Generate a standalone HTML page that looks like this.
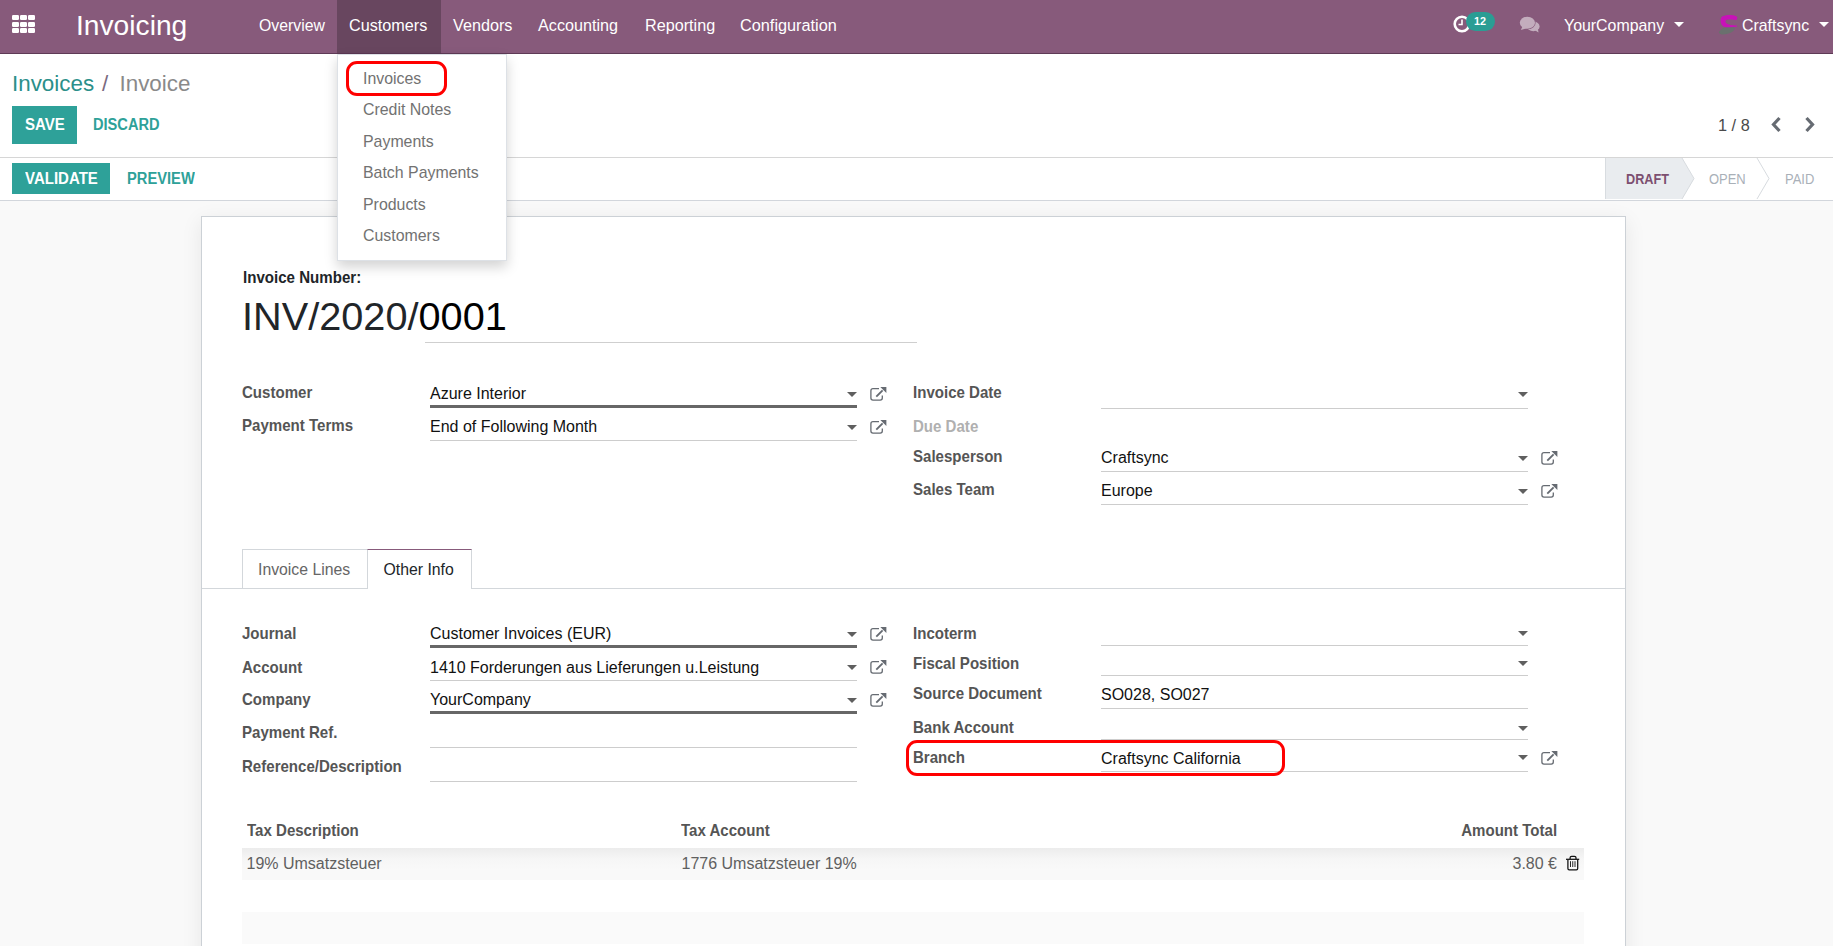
<!DOCTYPE html>
<html><head><meta charset="utf-8"><title>Invoice</title>
<style>
html,body{margin:0;padding:0;width:1833px;height:946px;overflow:hidden;background:#f9f9f9;font-family:"Liberation Sans", sans-serif;}
.t{position:absolute;line-height:1;white-space:nowrap;}
</style></head><body>
<div style="position:absolute;left:0px;top:0px;width:1833px;height:53px;background:#875a7b"></div>
<div style="position:absolute;left:0px;top:53px;width:1833px;height:1px;background:#5e3a56"></div>
<div style="position:absolute;left:337px;top:0px;width:104px;height:53px;background:#68465f"></div>
<div style="position:absolute;left:337px;top:53px;width:104px;height:1px;background:#5a3752"></div>
<div style="position:absolute;left:12px;top:14.9px;width:6.6px;height:5px;background:#fff;border-radius:1.2px"></div>
<div style="position:absolute;left:12px;top:21.5px;width:6.6px;height:5px;background:#fff;border-radius:1.2px"></div>
<div style="position:absolute;left:12px;top:28.1px;width:6.6px;height:5px;background:#fff;border-radius:1.2px"></div>
<div style="position:absolute;left:20px;top:14.9px;width:6.6px;height:5px;background:#fff;border-radius:1.2px"></div>
<div style="position:absolute;left:20px;top:21.5px;width:6.6px;height:5px;background:#fff;border-radius:1.2px"></div>
<div style="position:absolute;left:20px;top:28.1px;width:6.6px;height:5px;background:#fff;border-radius:1.2px"></div>
<div style="position:absolute;left:28px;top:14.9px;width:6.6px;height:5px;background:#fff;border-radius:1.2px"></div>
<div style="position:absolute;left:28px;top:21.5px;width:6.6px;height:5px;background:#fff;border-radius:1.2px"></div>
<div style="position:absolute;left:28px;top:28.1px;width:6.6px;height:5px;background:#fff;border-radius:1.2px"></div>
<div class="t" style="left:76px;top:11.33px;font-size:28.2px;font-weight:400;color:#fff;">Invoicing</div>
<div class="t" style="left:259px;top:17.63px;font-size:15.8px;font-weight:400;color:#fff;">Overview</div>
<div class="t" style="left:349px;top:17.29px;font-size:16.2px;font-weight:400;color:#fff;">Customers</div>
<div class="t" style="left:453px;top:17.29px;font-size:16.2px;font-weight:400;color:#fff;">Vendors</div>
<div class="t" style="left:538px;top:17.29px;font-size:16.2px;font-weight:400;color:#fff;">Accounting</div>
<div class="t" style="left:645px;top:17.29px;font-size:16.2px;font-weight:400;color:#fff;">Reporting</div>
<div class="t" style="left:740px;top:17.20px;font-size:16.3px;font-weight:400;color:#fff;">Configuration</div>
<svg style="position:absolute;left:1452px;top:14px" width="20" height="20" viewBox="0 0 20 20"><circle cx="10" cy="10" r="7.3" fill="none" stroke="#fff" stroke-width="2.6"/><path d="M10 5.5V10.5H6.5" fill="none" stroke="#fff" stroke-width="1.6"/></svg>
<div style="position:absolute;left:1466px;top:12px;width:29px;height:19px;background:#2a9d94;border-radius:10px"></div>
<div class="t" style="left:1474px;top:16.36px;font-size:10.8px;font-weight:700;color:#fff;">12</div>
<svg style="position:absolute;left:1518px;top:15px" width="24" height="20" viewBox="0 0 24 20"><g fill="#c3adbd"><ellipse cx="15.3" cy="11.4" rx="6.3" ry="4.9"/><path d="M16.5 15 L20.5 17.6 L19.8 13.5Z"/></g><g fill="#c3adbd" stroke="#875a7b" stroke-width="1.3"><ellipse cx="9.4" cy="7.7" rx="7.6" ry="6"/></g><g fill="#c3adbd"><ellipse cx="9.4" cy="7.7" rx="7.6" ry="6"/><path d="M4.5 11.5 L2.8 15 L9 13.2Z"/></g></svg>
<div class="t" style="left:1564px;top:17.54px;font-size:15.9px;font-weight:400;color:#fff;">YourCompany</div>
<svg style="position:absolute;left:1674px;top:22px" width="10" height="5" viewBox="0 0 10 5"><path d="M0 0H10L5 5Z" fill="#fff"/></svg>
<svg style="position:absolute;left:1712px;top:10px" width="30" height="28" viewBox="0 0 30 28"><ellipse cx="14.8" cy="20.6" rx="8.2" ry="3.4" transform="rotate(-16 14.8 20.6)" fill="#6a706e"/><path d="M25.4 7.6 C24.6 4.2, 13.5 4.2, 10 6.6 C7.8 8.5, 8 14.5, 11.5 16.4 C15 17.8, 21 17.2, 25.4 16.6 L24.6 15.6 C20.5 15.4, 16 14.8, 14 13 C12.8 11.6, 13.4 9.8, 15.5 9.6 C18.5 9.3, 22 9.6, 24.5 10.2 Z" fill="#c812b8"/></svg>
<div class="t" style="left:1742px;top:17.54px;font-size:15.9px;font-weight:400;color:#fff;">Craftsync</div>
<svg style="position:absolute;left:1819px;top:22px" width="10" height="5" viewBox="0 0 10 5"><path d="M0 0H10L5 5Z" fill="#fff"/></svg>
<div style="position:absolute;left:0px;top:54px;width:1833px;height:103px;background:#fff"></div>
<div style="position:absolute;left:0px;top:157px;width:1833px;height:1px;background:#d6d6d6"></div>
<div class="t" style="left:12px;top:73.04px;font-size:22.4px;font-weight:400;color:#2b8f8a;">Invoices</div>
<div class="t" style="left:102px;top:73.04px;font-size:22.4px;font-weight:400;color:#7a6a80;">/</div>
<div class="t" style="left:119.5px;top:73.04px;font-size:22.4px;font-weight:400;color:#8a8a8a;">Invoice</div>
<div style="position:absolute;left:12px;top:106px;width:65px;height:38px;background:#2ea199"></div>
<div class="t" style="left:24.5px;top:116.63px;font-size:15.8px;font-weight:700;color:#fff;transform:scaleX(0.95);transform-origin:0 0;">SAVE</div>
<div class="t" style="left:93px;top:116.63px;font-size:15.8px;font-weight:700;color:#2ea199;transform:scaleX(0.925);transform-origin:0 0;">DISCARD</div>
<div class="t" style="left:1718px;top:117.20px;font-size:16.3px;font-weight:400;color:#4a4a4a;">1 / 8</div>
<svg style="position:absolute;left:1770px;top:116px" width="13" height="17" viewBox="0 0 13 17"><path d="M9.5 2 L3.5 8.5 L9.5 15" fill="none" stroke="#666b72" stroke-width="3.2"/></svg>
<svg style="position:absolute;left:1803px;top:116px" width="13" height="17" viewBox="0 0 13 17"><path d="M3.5 2 L9.5 8.5 L3.5 15" fill="none" stroke="#666b72" stroke-width="3.2"/></svg>
<div style="position:absolute;left:0px;top:158px;width:1833px;height:42px;background:#fff"></div>
<div style="position:absolute;left:0px;top:200px;width:1833px;height:1px;background:#d2d6dc"></div>
<div style="position:absolute;left:12px;top:163px;width:98px;height:31px;background:#2ea199"></div>
<div class="t" style="left:24.5px;top:170.83px;font-size:15.8px;font-weight:700;color:#fff;transform:scaleX(0.95);transform-origin:0 0;">VALIDATE</div>
<div class="t" style="left:127px;top:170.83px;font-size:15.8px;font-weight:700;color:#2ea199;transform:scaleX(0.93);transform-origin:0 0;">PREVIEW</div>
<svg style="position:absolute;left:1605px;top:158px" width="229" height="42" viewBox="0 0 229 42"><path d="M1 0 H77 L89 20.5 L77 41 H1Z" fill="#e9ecef"/><path d="M0.5 0 V41" stroke="#d8dce0" stroke-width="1"/><path d="M77 0 L89 20.5 L77 41" fill="none" stroke="#d7dbdf" stroke-width="1"/><path d="M152 0 L164 20.5 L152 41" fill="none" stroke="#d7dbdf" stroke-width="1"/></svg>
<div class="t" style="left:1625.5px;top:171.81px;font-size:14.4px;font-weight:700;color:#7c4f70;transform:scaleX(0.88);transform-origin:0 0;">DRAFT</div>
<div class="t" style="left:1708.5px;top:171.81px;font-size:14.4px;font-weight:400;color:#a9b0b8;transform:scaleX(0.9);transform-origin:0 0;">OPEN</div>
<div class="t" style="left:1784.5px;top:171.81px;font-size:14.4px;font-weight:400;color:#a9b0b8;transform:scaleX(0.9);transform-origin:0 0;">PAID</div>
<div style="position:absolute;left:201px;top:216px;width:1425px;height:800px;background:#fff;border:1px solid #ccd1d6;box-sizing:border-box;box-shadow:0 5px 20px rgba(0,0,0,0.08)"></div>
<div class="t" style="left:242.5px;top:269.63px;font-size:15.8px;font-weight:700;color:#212529;transform:scaleX(0.955);transform-origin:0 0;">Invoice Number:</div>
<div class="t" style="left:242px;top:297.19px;font-size:39.7px;font-weight:400;color:#212529;">INV/2020/<span style="color:#000">0001</span></div>
<div style="position:absolute;left:425px;top:342px;width:492px;height:1px;background:#cfcfcf"></div>
<div class="t" style="left:242px;top:384.29px;font-size:16.2px;font-weight:700;color:#555;transform:scaleX(0.93);transform-origin:0 0;">Customer</div>
<div class="t" style="left:430px;top:386.06px;font-size:16px;font-weight:400;color:#111;">Azure Interior</div>
<div style="position:absolute;left:430px;top:405px;width:427px;height:3px;background:#676767"></div>
<svg style="position:absolute;left:847px;top:391.7px" width="10" height="5" viewBox="0 0 10 5"><path d="M0 0H10L5 5Z" fill="#5f5f5f"/></svg>
<svg style="position:absolute;left:869px;top:386px" width="18" height="16" viewBox="0 0 18 16"><path d="M10 2.7 H4 Q1.9 2.7 1.9 4.8 V12 Q1.9 14.1 4 14.1 H11.2 Q13.3 14.1 13.3 12 V9.4" fill="none" stroke="#666b72" stroke-width="1.3"/><path d="M7.3 10.7 L13.6 4.4" fill="none" stroke="#666b72" stroke-width="1.9"/><path d="M11.3 1 H17.4 V7.1 Z" fill="#666b72"/></svg>
<div class="t" style="left:242px;top:417.29px;font-size:16.2px;font-weight:700;color:#555;transform:scaleX(0.93);transform-origin:0 0;">Payment Terms</div>
<div class="t" style="left:430px;top:419.06px;font-size:16px;font-weight:400;color:#111;">End of Following Month</div>
<div style="position:absolute;left:430px;top:440px;width:427px;height:1px;background:#cdcdcd"></div>
<svg style="position:absolute;left:847px;top:424.5px" width="10" height="5" viewBox="0 0 10 5"><path d="M0 0H10L5 5Z" fill="#5f5f5f"/></svg>
<svg style="position:absolute;left:869px;top:419px" width="18" height="16" viewBox="0 0 18 16"><path d="M10 2.7 H4 Q1.9 2.7 1.9 4.8 V12 Q1.9 14.1 4 14.1 H11.2 Q13.3 14.1 13.3 12 V9.4" fill="none" stroke="#666b72" stroke-width="1.3"/><path d="M7.3 10.7 L13.6 4.4" fill="none" stroke="#666b72" stroke-width="1.9"/><path d="M11.3 1 H17.4 V7.1 Z" fill="#666b72"/></svg>
<div class="t" style="left:912.5px;top:384.29px;font-size:16.2px;font-weight:700;color:#555;transform:scaleX(0.93);transform-origin:0 0;">Invoice Date</div>
<div style="position:absolute;left:1101px;top:408px;width:427px;height:1px;background:#cdcdcd"></div>
<svg style="position:absolute;left:1518px;top:391.6px" width="10" height="5" viewBox="0 0 10 5"><path d="M0 0H10L5 5Z" fill="#5f5f5f"/></svg>
<div class="t" style="left:912.5px;top:418.29px;font-size:16.2px;font-weight:700;color:#b0b0b0;transform:scaleX(0.93);transform-origin:0 0;">Due Date</div>
<div class="t" style="left:912.5px;top:448.29px;font-size:16.2px;font-weight:700;color:#555;transform:scaleX(0.93);transform-origin:0 0;">Salesperson</div>
<div class="t" style="left:1101px;top:450.06px;font-size:16px;font-weight:400;color:#111;">Craftsync</div>
<div style="position:absolute;left:1101px;top:471px;width:427px;height:1px;background:#cdcdcd"></div>
<svg style="position:absolute;left:1518px;top:455.5px" width="10" height="5" viewBox="0 0 10 5"><path d="M0 0H10L5 5Z" fill="#5f5f5f"/></svg>
<svg style="position:absolute;left:1540px;top:450px" width="18" height="16" viewBox="0 0 18 16"><path d="M10 2.7 H4 Q1.9 2.7 1.9 4.8 V12 Q1.9 14.1 4 14.1 H11.2 Q13.3 14.1 13.3 12 V9.4" fill="none" stroke="#666b72" stroke-width="1.3"/><path d="M7.3 10.7 L13.6 4.4" fill="none" stroke="#666b72" stroke-width="1.9"/><path d="M11.3 1 H17.4 V7.1 Z" fill="#666b72"/></svg>
<div class="t" style="left:912.5px;top:481.29px;font-size:16.2px;font-weight:700;color:#555;transform:scaleX(0.93);transform-origin:0 0;">Sales Team</div>
<div class="t" style="left:1101px;top:483.06px;font-size:16px;font-weight:400;color:#111;">Europe</div>
<div style="position:absolute;left:1101px;top:504px;width:427px;height:1px;background:#cdcdcd"></div>
<svg style="position:absolute;left:1518px;top:488.5px" width="10" height="5" viewBox="0 0 10 5"><path d="M0 0H10L5 5Z" fill="#5f5f5f"/></svg>
<svg style="position:absolute;left:1540px;top:483px" width="18" height="16" viewBox="0 0 18 16"><path d="M10 2.7 H4 Q1.9 2.7 1.9 4.8 V12 Q1.9 14.1 4 14.1 H11.2 Q13.3 14.1 13.3 12 V9.4" fill="none" stroke="#666b72" stroke-width="1.3"/><path d="M7.3 10.7 L13.6 4.4" fill="none" stroke="#666b72" stroke-width="1.9"/><path d="M11.3 1 H17.4 V7.1 Z" fill="#666b72"/></svg>
<div style="position:absolute;left:202px;top:588px;width:1423px;height:1px;background:#d3d7db"></div>
<div style="position:absolute;left:242px;top:549px;width:126px;height:39px;background:#fff;border:1px solid #d3d7db;border-bottom:none;box-sizing:border-box"></div>
<div style="position:absolute;left:367px;top:549px;width:105px;height:40px;background:#fff;border:1px solid #d3d7db;border-top:1px solid #875a7b;border-bottom:none;box-sizing:border-box"></div>
<div class="t" style="left:258px;top:561.63px;font-size:15.8px;font-weight:400;color:#666;">Invoice Lines</div>
<div class="t" style="left:383.5px;top:561.63px;font-size:15.8px;font-weight:400;color:#212529;">Other Info</div>
<div class="t" style="left:242px;top:625.29px;font-size:16.2px;font-weight:700;color:#555;transform:scaleX(0.93);transform-origin:0 0;">Journal</div>
<div class="t" style="left:430px;top:626.06px;font-size:16px;font-weight:400;color:#111;">Customer Invoices (EUR)</div>
<div style="position:absolute;left:430px;top:645px;width:427px;height:3px;background:#676767"></div>
<svg style="position:absolute;left:847px;top:631.7px" width="10" height="5" viewBox="0 0 10 5"><path d="M0 0H10L5 5Z" fill="#5f5f5f"/></svg>
<svg style="position:absolute;left:869px;top:626px" width="18" height="16" viewBox="0 0 18 16"><path d="M10 2.7 H4 Q1.9 2.7 1.9 4.8 V12 Q1.9 14.1 4 14.1 H11.2 Q13.3 14.1 13.3 12 V9.4" fill="none" stroke="#666b72" stroke-width="1.3"/><path d="M7.3 10.7 L13.6 4.4" fill="none" stroke="#666b72" stroke-width="1.9"/><path d="M11.3 1 H17.4 V7.1 Z" fill="#666b72"/></svg>
<div class="t" style="left:242px;top:659.29px;font-size:16.2px;font-weight:700;color:#555;transform:scaleX(0.93);transform-origin:0 0;">Account</div>
<div class="t" style="left:430px;top:659.56px;font-size:16px;font-weight:400;color:#111;">1410 Forderungen aus Lieferungen u.Leistung</div>
<div style="position:absolute;left:430px;top:680px;width:427px;height:1px;background:#cdcdcd"></div>
<svg style="position:absolute;left:847px;top:664.5px" width="10" height="5" viewBox="0 0 10 5"><path d="M0 0H10L5 5Z" fill="#5f5f5f"/></svg>
<svg style="position:absolute;left:869px;top:659px" width="18" height="16" viewBox="0 0 18 16"><path d="M10 2.7 H4 Q1.9 2.7 1.9 4.8 V12 Q1.9 14.1 4 14.1 H11.2 Q13.3 14.1 13.3 12 V9.4" fill="none" stroke="#666b72" stroke-width="1.3"/><path d="M7.3 10.7 L13.6 4.4" fill="none" stroke="#666b72" stroke-width="1.9"/><path d="M11.3 1 H17.4 V7.1 Z" fill="#666b72"/></svg>
<div class="t" style="left:242px;top:691.29px;font-size:16.2px;font-weight:700;color:#555;transform:scaleX(0.93);transform-origin:0 0;">Company</div>
<div class="t" style="left:430px;top:692.06px;font-size:16px;font-weight:400;color:#111;">YourCompany</div>
<div style="position:absolute;left:430px;top:711px;width:427px;height:3px;background:#676767"></div>
<svg style="position:absolute;left:847px;top:697.7px" width="10" height="5" viewBox="0 0 10 5"><path d="M0 0H10L5 5Z" fill="#5f5f5f"/></svg>
<svg style="position:absolute;left:869px;top:692px" width="18" height="16" viewBox="0 0 18 16"><path d="M10 2.7 H4 Q1.9 2.7 1.9 4.8 V12 Q1.9 14.1 4 14.1 H11.2 Q13.3 14.1 13.3 12 V9.4" fill="none" stroke="#666b72" stroke-width="1.3"/><path d="M7.3 10.7 L13.6 4.4" fill="none" stroke="#666b72" stroke-width="1.9"/><path d="M11.3 1 H17.4 V7.1 Z" fill="#666b72"/></svg>
<div class="t" style="left:242px;top:724.09px;font-size:16.2px;font-weight:700;color:#555;transform:scaleX(0.93);transform-origin:0 0;">Payment Ref.</div>
<div style="position:absolute;left:430px;top:747px;width:427px;height:1px;background:#cdcdcd"></div>
<div class="t" style="left:242px;top:758.29px;font-size:16.2px;font-weight:700;color:#555;transform:scaleX(0.93);transform-origin:0 0;">Reference/Description</div>
<div style="position:absolute;left:430px;top:781px;width:427px;height:1px;background:#cdcdcd"></div>
<div class="t" style="left:912.5px;top:625.29px;font-size:16.2px;font-weight:700;color:#555;transform:scaleX(0.93);transform-origin:0 0;">Incoterm</div>
<div style="position:absolute;left:1101px;top:645px;width:427px;height:1px;background:#cdcdcd"></div>
<svg style="position:absolute;left:1518px;top:631.4px" width="10" height="5" viewBox="0 0 10 5"><path d="M0 0H10L5 5Z" fill="#5f5f5f"/></svg>
<div class="t" style="left:912.5px;top:655.29px;font-size:16.2px;font-weight:700;color:#555;transform:scaleX(0.93);transform-origin:0 0;">Fiscal Position</div>
<div style="position:absolute;left:1101px;top:675px;width:427px;height:1px;background:#cdcdcd"></div>
<svg style="position:absolute;left:1518px;top:661.2px" width="10" height="5" viewBox="0 0 10 5"><path d="M0 0H10L5 5Z" fill="#5f5f5f"/></svg>
<div class="t" style="left:912.5px;top:685.29px;font-size:16.2px;font-weight:700;color:#555;transform:scaleX(0.93);transform-origin:0 0;">Source Document</div>
<div class="t" style="left:1101px;top:687.06px;font-size:16px;font-weight:400;color:#111;">SO028, SO027</div>
<div style="position:absolute;left:1101px;top:708px;width:427px;height:1px;background:#cdcdcd"></div>
<div class="t" style="left:912.5px;top:719.29px;font-size:16.2px;font-weight:700;color:#555;transform:scaleX(0.93);transform-origin:0 0;">Bank Account</div>
<div style="position:absolute;left:1101px;top:739px;width:427px;height:1px;background:#cdcdcd"></div>
<svg style="position:absolute;left:1518px;top:725.5px" width="10" height="5" viewBox="0 0 10 5"><path d="M0 0H10L5 5Z" fill="#5f5f5f"/></svg>
<div class="t" style="left:912.5px;top:749.29px;font-size:16.2px;font-weight:700;color:#555;transform:scaleX(0.93);transform-origin:0 0;">Branch</div>
<div class="t" style="left:1101px;top:751.06px;font-size:16px;font-weight:400;color:#111;">Craftsync California</div>
<div style="position:absolute;left:1101px;top:771px;width:427px;height:1px;background:#cdcdcd"></div>
<svg style="position:absolute;left:1518px;top:755px" width="10" height="5" viewBox="0 0 10 5"><path d="M0 0H10L5 5Z" fill="#5f5f5f"/></svg>
<svg style="position:absolute;left:1540px;top:750px" width="18" height="16" viewBox="0 0 18 16"><path d="M10 2.7 H4 Q1.9 2.7 1.9 4.8 V12 Q1.9 14.1 4 14.1 H11.2 Q13.3 14.1 13.3 12 V9.4" fill="none" stroke="#666b72" stroke-width="1.3"/><path d="M7.3 10.7 L13.6 4.4" fill="none" stroke="#666b72" stroke-width="1.9"/><path d="M11.3 1 H17.4 V7.1 Z" fill="#666b72"/></svg>
<div style="position:absolute;left:906px;top:740px;width:379px;height:36px;border:3px solid #ff0000;border-radius:11px;box-sizing:border-box"></div>
<div class="t" style="left:246.5px;top:822.29px;font-size:16.2px;font-weight:700;color:#555;transform:scaleX(0.93);transform-origin:0 0;">Tax Description</div>
<div class="t" style="left:681px;top:822.29px;font-size:16.2px;font-weight:700;color:#555;transform:scaleX(0.93);transform-origin:0 0;">Tax Account</div>
<div class="t" style="right:275.5px;top:822.29px;font-size:16.2px;font-weight:700;color:#555;transform:scaleX(0.93);transform-origin:100% 0;">Amount Total</div>
<div style="position:absolute;left:242px;top:848px;width:1342px;height:32px;background:linear-gradient(#ececec,#f6f6f6 35%,#f9f9f9 70%)"></div>
<div class="t" style="left:246.5px;top:856.26px;font-size:16px;font-weight:400;color:#606060;">19% Umsatzsteuer</div>
<div class="t" style="left:681.5px;top:856.26px;font-size:16px;font-weight:400;color:#606060;">1776 Umsatzsteuer 19%</div>
<div class="t" style="right:276px;top:856.26px;font-size:16px;font-weight:400;color:#606060;">3.80 €</div>
<svg style="position:absolute;left:1564px;top:854px" width="18" height="18" viewBox="0 0 18 18"><g fill="none" stroke="#111" stroke-width="1.25"><path d="M2 5.3H15.2"/><path d="M6.1 5V3.8Q6.1 2.3 7.6 2.3H10.5Q12 2.3 12 3.8V5"/><path d="M3.9 5.5V14.6Q3.9 15.9 5.2 15.9H12.4Q13.7 15.9 13.7 14.6V5.5"/><path d="M6.5 7.2V13M8.75 7.2V13M11 7.2V13" stroke-width="0.9"/></g></svg>
<div style="position:absolute;left:242px;top:912px;width:1342px;height:32px;background:#fafafa"></div>
<div style="position:absolute;left:337px;top:54px;width:170px;height:207px;background:#fff;border:1px solid #dde1e6;box-sizing:border-box;box-shadow:0 6px 12px rgba(0,0,0,0.175)"></div>
<div class="t" style="left:363px;top:71.04px;font-size:15.9px;font-weight:400;color:#727272;">Invoices</div>
<div class="t" style="left:363px;top:102.04px;font-size:15.9px;font-weight:400;color:#727272;">Credit Notes</div>
<div class="t" style="left:363px;top:133.54px;font-size:15.9px;font-weight:400;color:#727272;">Payments</div>
<div class="t" style="left:363px;top:165.04px;font-size:15.9px;font-weight:400;color:#727272;">Batch Payments</div>
<div class="t" style="left:363px;top:197.04px;font-size:15.9px;font-weight:400;color:#727272;">Products</div>
<div class="t" style="left:363px;top:228.04px;font-size:15.9px;font-weight:400;color:#727272;">Customers</div>
<div style="position:absolute;left:346px;top:61px;width:101px;height:35px;border:3px solid #ff0000;border-radius:11px;box-sizing:border-box"></div>
</body></html>
